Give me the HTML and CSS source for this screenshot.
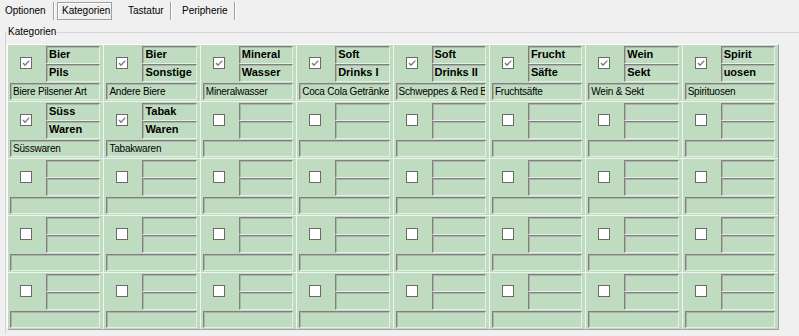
FILE: index.html
```html
<!DOCTYPE html>
<html lang="de">
<head>
<meta charset="utf-8">
<title>Kategorien</title>
<link rel="stylesheet" href="styles.css">
</head>
<body>
<div class="tabs">
  <div class="tab t1">Optionen</div>
  <div class="sep"></div>
  <div class="tab active">Kategorien</div>
  <div class="tab t3">Tastatur</div>
  <div class="sep"></div>
  <div class="tab t4">Peripherie</div>
  <div class="sep"></div>
</div>
<fieldset class="group">
  <legend>Kategorien</legend>
  <div class="grid">
    <div class="cell"><span class="chk on"><svg viewBox="0 0 10 10"><path d="M2 5 L4 7.2 L8.3 2.6"/></svg></span><span class="lbl">Bier</span><span class="lbl">Pils</span><span class="fld">Biere Pilsener Art</span></div>
    <div class="cell"><span class="chk on"><svg viewBox="0 0 10 10"><path d="M2 5 L4 7.2 L8.3 2.6"/></svg></span><span class="lbl">Bier</span><span class="lbl">Sonstige</span><span class="fld">Andere Biere</span></div>
    <div class="cell"><span class="chk on"><svg viewBox="0 0 10 10"><path d="M2 5 L4 7.2 L8.3 2.6"/></svg></span><span class="lbl">Mineral</span><span class="lbl">Wasser</span><span class="fld">Mineralwasser</span></div>
    <div class="cell"><span class="chk on"><svg viewBox="0 0 10 10"><path d="M2 5 L4 7.2 L8.3 2.6"/></svg></span><span class="lbl">Soft</span><span class="lbl">Drinks I</span><span class="fld">Coca Cola Getränke</span></div>
    <div class="cell"><span class="chk on"><svg viewBox="0 0 10 10"><path d="M2 5 L4 7.2 L8.3 2.6"/></svg></span><span class="lbl">Soft</span><span class="lbl">Drinks II</span><span class="fld">Schweppes &amp; Red Bull</span></div>
    <div class="cell"><span class="chk on"><svg viewBox="0 0 10 10"><path d="M2 5 L4 7.2 L8.3 2.6"/></svg></span><span class="lbl">Frucht</span><span class="lbl">Säfte</span><span class="fld">Fruchtsäfte</span></div>
    <div class="cell"><span class="chk on"><svg viewBox="0 0 10 10"><path d="M2 5 L4 7.2 L8.3 2.6"/></svg></span><span class="lbl">Wein</span><span class="lbl">Sekt</span><span class="fld">Wein &amp; Sekt</span></div>
    <div class="cell"><span class="chk on"><svg viewBox="0 0 10 10"><path d="M2 5 L4 7.2 L8.3 2.6"/></svg></span><span class="lbl">Spirit</span><span class="lbl">uosen</span><span class="fld">Spirituosen</span></div>

    <div class="cell"><span class="chk on"><svg viewBox="0 0 10 10"><path d="M2 5 L4 7.2 L8.3 2.6"/></svg></span><span class="lbl">Süss</span><span class="lbl">Waren</span><span class="fld">Süsswaren</span></div>
    <div class="cell"><span class="chk on"><svg viewBox="0 0 10 10"><path d="M2 5 L4 7.2 L8.3 2.6"/></svg></span><span class="lbl">Tabak</span><span class="lbl">Waren</span><span class="fld">Tabakwaren</span></div>
    <div class="cell"><span class="chk"></span><span class="lbl"></span><span class="lbl"></span><span class="fld"></span></div>
    <div class="cell"><span class="chk"></span><span class="lbl"></span><span class="lbl"></span><span class="fld"></span></div>
    <div class="cell"><span class="chk"></span><span class="lbl"></span><span class="lbl"></span><span class="fld"></span></div>
    <div class="cell"><span class="chk"></span><span class="lbl"></span><span class="lbl"></span><span class="fld"></span></div>
    <div class="cell"><span class="chk"></span><span class="lbl"></span><span class="lbl"></span><span class="fld"></span></div>
    <div class="cell"><span class="chk"></span><span class="lbl"></span><span class="lbl"></span><span class="fld"></span></div>

    <div class="cell"><span class="chk"></span><span class="lbl"></span><span class="lbl"></span><span class="fld"></span></div>
    <div class="cell"><span class="chk"></span><span class="lbl"></span><span class="lbl"></span><span class="fld"></span></div>
    <div class="cell"><span class="chk"></span><span class="lbl"></span><span class="lbl"></span><span class="fld"></span></div>
    <div class="cell"><span class="chk"></span><span class="lbl"></span><span class="lbl"></span><span class="fld"></span></div>
    <div class="cell"><span class="chk"></span><span class="lbl"></span><span class="lbl"></span><span class="fld"></span></div>
    <div class="cell"><span class="chk"></span><span class="lbl"></span><span class="lbl"></span><span class="fld"></span></div>
    <div class="cell"><span class="chk"></span><span class="lbl"></span><span class="lbl"></span><span class="fld"></span></div>
    <div class="cell"><span class="chk"></span><span class="lbl"></span><span class="lbl"></span><span class="fld"></span></div>

    <div class="cell"><span class="chk"></span><span class="lbl"></span><span class="lbl"></span><span class="fld"></span></div>
    <div class="cell"><span class="chk"></span><span class="lbl"></span><span class="lbl"></span><span class="fld"></span></div>
    <div class="cell"><span class="chk"></span><span class="lbl"></span><span class="lbl"></span><span class="fld"></span></div>
    <div class="cell"><span class="chk"></span><span class="lbl"></span><span class="lbl"></span><span class="fld"></span></div>
    <div class="cell"><span class="chk"></span><span class="lbl"></span><span class="lbl"></span><span class="fld"></span></div>
    <div class="cell"><span class="chk"></span><span class="lbl"></span><span class="lbl"></span><span class="fld"></span></div>
    <div class="cell"><span class="chk"></span><span class="lbl"></span><span class="lbl"></span><span class="fld"></span></div>
    <div class="cell"><span class="chk"></span><span class="lbl"></span><span class="lbl"></span><span class="fld"></span></div>

    <div class="cell"><span class="chk"></span><span class="lbl"></span><span class="lbl"></span><span class="fld"></span></div>
    <div class="cell"><span class="chk"></span><span class="lbl"></span><span class="lbl"></span><span class="fld"></span></div>
    <div class="cell"><span class="chk"></span><span class="lbl"></span><span class="lbl"></span><span class="fld"></span></div>
    <div class="cell"><span class="chk"></span><span class="lbl"></span><span class="lbl"></span><span class="fld"></span></div>
    <div class="cell"><span class="chk"></span><span class="lbl"></span><span class="lbl"></span><span class="fld"></span></div>
    <div class="cell"><span class="chk"></span><span class="lbl"></span><span class="lbl"></span><span class="fld"></span></div>
    <div class="cell"><span class="chk"></span><span class="lbl"></span><span class="lbl"></span><span class="fld"></span></div>
    <div class="cell"><span class="chk"></span><span class="lbl"></span><span class="lbl"></span><span class="fld"></span></div>
  </div>
</fieldset>
</body>
</html>
```
FILE: styles.css
```css
html, body {
  margin: 0;
  padding: 0;
  background: #f0f0f0;
  overflow: hidden;
}
body {
  font-family: "Liberation Sans", Arial, sans-serif;
  font-size: 10px;
  color: #000;
  width: 799px;
  height: 336px;
}
.tabs {
  display: flex;
  height: 18px;
  margin-top: 2px;
}
.tab {
  box-sizing: border-box;
  line-height: 17px;
  white-space: nowrap;
}
.t1 { width: 53px; padding-left: 5px; }
.active {
  width: 55px;
  margin-left: 3px;
  padding-left: 4px;
  border: 1px solid #a0a0a0;
  box-shadow: inset 1px 1px #ffffff;
  line-height: 15px;
}
.t3 { width: 58px; padding-left: 16px; }
.t4 { width: 63px; padding-left: 11px; }
.sep {
  width: 1px;
  background: #a0a0a0;
  box-shadow: 1px 0 #ffffff;
}
.group {
  margin: 6px 0 0 5px;
  padding: 6px 0 0 1px;
  width: 820px;
  height: 308px;
  box-sizing: border-box;
  border: 1px solid #d5d5d5;
  border-right: none;
  border-bottom: none;
  min-width: 0;
}
.group legend {
  padding: 0 1px;
  margin-left: 0;
  line-height: 12px;
}
.grid {
  display: grid;
  grid-template-columns: repeat(8, 1fr);
  grid-auto-rows: 56px;
  gap: 1px;
  width: 772px;
  box-sizing: border-box;
  background: #f0f4f0;
  border: 1px solid;
  border-color: #ffffff #a0a0a0 #a0a0a0 #ffffff;
}
.cell {
  background: #c0dcc0;
  display: grid;
  grid-template-columns: 36px minmax(0, 1fr);
  grid-template-rows: 18px 18px 18px;
  padding: 1px 3px 1px 2px;
  min-width: 0;
}
.chk {
  grid-row: 1 / 3;
  align-self: center;
  justify-self: start;
  margin-left: 10px;
  margin-top: -3px;
  width: 12px;
  height: 12px;
  box-sizing: border-box;
  border: 1px solid #6a6a6a;
  background: #ffffff;
  display: flex;
}
.chk svg {
  width: 10px;
  height: 10px;
}
.chk path {
  fill: none;
  stroke: #7a7a7a;
  stroke-width: 1.3;
}
.lbl, .fld {
  box-sizing: border-box;
  border: 1px solid;
  border-color: #808080 #e6eee6 #e6eee6 #808080;
  box-shadow: inset 1px 1px #a8b4a8;
  overflow: hidden;
  white-space: nowrap;
  min-width: 0;
}
.lbl {
  font-weight: bold;
  font-size: 11px;
  line-height: 15px;
  padding-left: 2px;
}
.fld {
  grid-column: 1 / -1;
  padding-left: 2px;
  line-height: 16px;
  margin-top: 1px;
  letter-spacing: -0.2px;
}
```
